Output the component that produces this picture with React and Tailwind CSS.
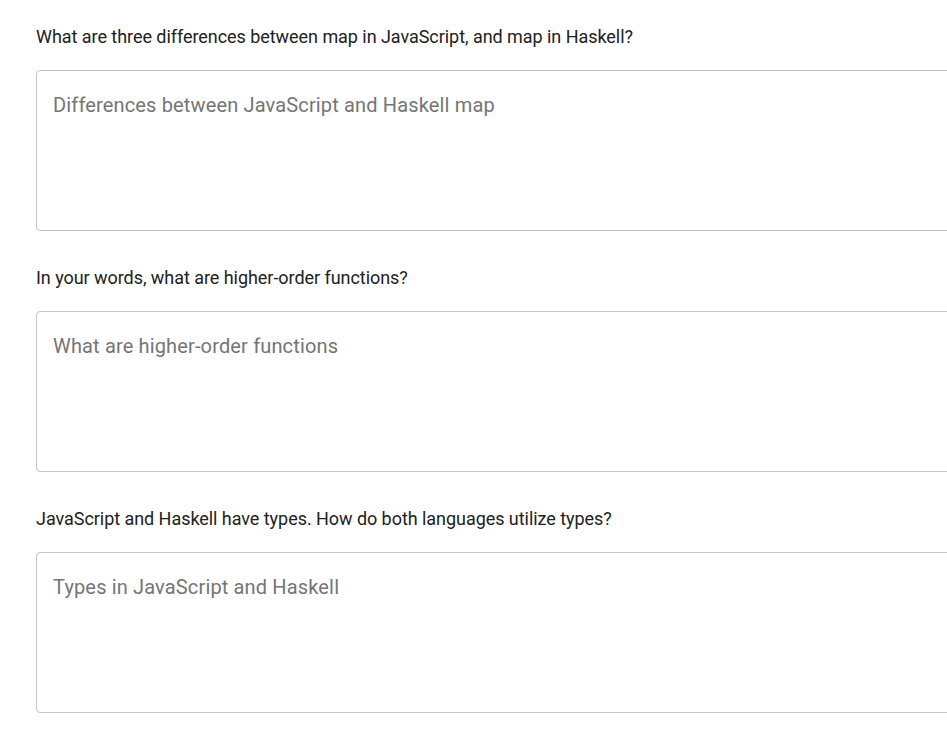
import React from "react";

const items = [
  ["What are three differences between map in JavaScript, and map in Haskell?", "Differences between JavaScript and Haskell map"],
  ["In your words, what are higher-order functions?", "What are higher-order functions"],
  ["JavaScript and Haskell have types. How do both languages utilize types?", "Types in JavaScript and Haskell"],
];

export default function App() {
  return (
    <div className="w-[947px] h-[747px] overflow-hidden bg-white pl-[36px] pt-[25px]" style={{ fontFamily: "Roboto, sans-serif" }}>
      <div className="flex flex-col gap-[35px]">
        {items.map(([q, p], i) => (
          <div key={i} className="flex flex-col">
            <div className="text-[18px] leading-[24px] text-[#212121] h-[24px] whitespace-nowrap tracking-[-0.05px]">{q}</div>
            <div className="mt-[21px] w-[1000px] h-[161px] shrink-0 border border-[#c4c4c4] rounded-[4px] px-[16px] pt-[21px]">
              <textarea
                className="w-full h-[120px] resize-none outline-none text-[20px] leading-[26px] text-[#212121] placeholder:text-[#757575] bg-transparent"
                style={{ fontFamily: "Roboto, sans-serif", letterSpacing: "0.15px" }}
                placeholder={p}
              />
            </div>
          </div>
        ))}
      </div>
    </div>
  );
}
